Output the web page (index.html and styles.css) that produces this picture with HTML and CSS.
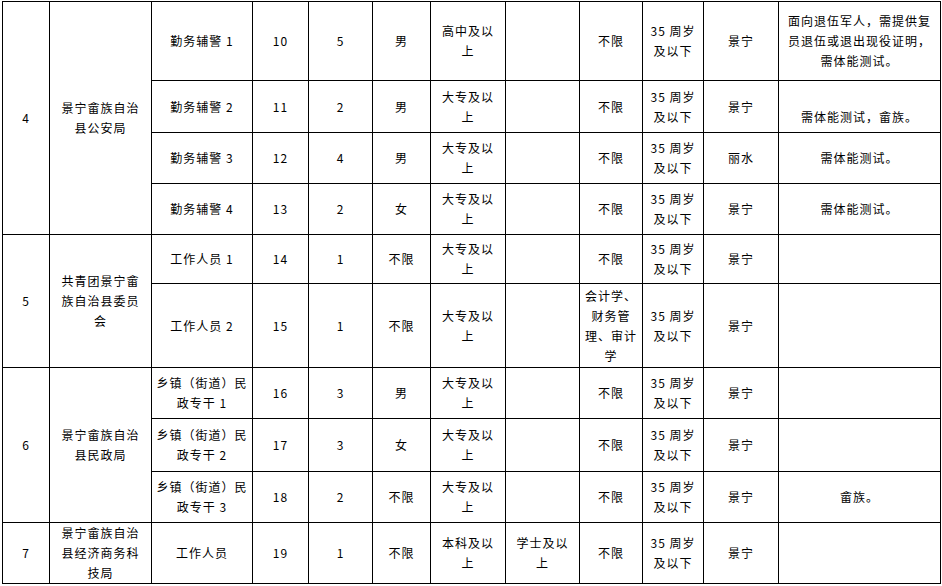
FILE: index.html
```html
<!DOCTYPE html>
<html lang="zh-CN">
<head>
<meta charset="utf-8">
<title>招聘岗位表</title>
<link rel="stylesheet" href="styles.css">
</head>
<body>
<table class="jobs">
  <colgroup>
    <col class="c-no"><col class="c-unit"><col class="c-pos"><col class="c-code"><col class="c-num"><col class="c-sex"><col class="c-edu"><col class="c-deg"><col class="c-major"><col class="c-age"><col class="c-area"><col class="c-note">
  </colgroup>
  <tbody>
    <tr class="h79">
      <td rowspan="4">4</td>
      <td rowspan="4">景宁畲族自治<br>县公安局</td>
      <td>勤务辅警 1</td><td>10</td><td>5</td><td>男</td><td>高中及以<br>上</td><td></td><td>不限</td><td>35 周岁<br>及以下</td><td>景宁</td>
      <td>面向退伍军人，需提供复<br>员退伍或退出现役证明，<br>需体能测试。</td>
    </tr>
    <tr class="h52">
      <td>勤务辅警 2</td><td>11</td><td>2</td><td>男</td><td>大专及以<br>上</td><td></td><td>不限</td><td>35 周岁<br>及以下</td><td>景宁</td>
      <td class="low">需体能测试，畲族。</td>
    </tr>
    <tr class="h51">
      <td>勤务辅警 3</td><td>12</td><td>4</td><td>男</td><td>大专及以<br>上</td><td></td><td>不限</td><td>35 周岁<br>及以下</td><td>丽水</td>
      <td>需体能测试。</td>
    </tr>
    <tr class="h51">
      <td>勤务辅警 4</td><td>13</td><td>2</td><td>女</td><td>大专及以<br>上</td><td></td><td>不限</td><td>35 周岁<br>及以下</td><td>景宁</td>
      <td>需体能测试。</td>
    </tr>
    <tr class="h49">
      <td rowspan="2">5</td>
      <td rowspan="2">共青团景宁畲<br>族自治县委员<br>会</td>
      <td>工作人员 1</td><td>14</td><td>1</td><td>不限</td><td>大专及以<br>上</td><td></td><td>不限</td><td>35 周岁<br>及以下</td><td>景宁</td><td></td>
    </tr>
    <tr class="h84">
      <td>工作人员 2</td><td>15</td><td>1</td><td>不限</td><td>大专及以<br>上</td><td></td><td>会计学、<br>财务管<br>理、审计<br>学</td><td>35 周岁<br>及以下</td><td>景宁</td><td></td>
    </tr>
    <tr class="h51">
      <td rowspan="3">6</td>
      <td rowspan="3">景宁畲族自治<br>县民政局</td>
      <td>乡镇（街道）民<br>政专干 1</td><td>16</td><td>3</td><td>男</td><td>大专及以<br>上</td><td></td><td>不限</td><td>35 周岁<br>及以下</td><td>景宁</td><td></td>
    </tr>
    <tr class="h53">
      <td>乡镇（街道）民<br>政专干 2</td><td>17</td><td>3</td><td>女</td><td>大专及以<br>上</td><td></td><td>不限</td><td>35 周岁<br>及以下</td><td>景宁</td><td></td>
    </tr>
    <tr class="h51">
      <td>乡镇（街道）民<br>政专干 3</td><td>18</td><td>2</td><td>不限</td><td>大专及以<br>上</td><td></td><td>不限</td><td>35 周岁<br>及以下</td><td>景宁</td><td>畲族。</td>
    </tr>
    <tr class="h61">
      <td>7</td>
      <td>景宁畲族自治<br>县经济商务科<br>技局</td>
      <td>工作人员</td><td>19</td><td>1</td><td>不限</td><td>本科及以<br>上</td><td>学士及以<br>上</td><td>不限</td><td>35 周岁<br>及以下</td><td>景宁</td><td></td>
    </tr>
  </tbody>
</table>
</body>
</html>
```

FILE: styles.css
```css
html, body {
  margin: 0;
  padding: 0;
  background: #ffffff;
}

body {
  padding: 1px 0 0 2px;
}

.jobs {
  border-collapse: collapse;
  table-layout: fixed;
  width: 938px;
  font-family: "Noto Sans CJK SC", "Liberation Sans", sans-serif;
  font-size: 12px;
  font-weight: 400;
  letter-spacing: 1px;
  line-height: 20px;
  color: #000000;
}

.jobs td {
  border: 1px solid #000000;
  padding: 0;
  text-align: center;
  vertical-align: middle;
  white-space: nowrap;
  overflow: hidden;
}

.c-no { width: 47px; }
.c-unit { width: 102px; }
.c-pos { width: 101px; }
.c-code { width: 56px; }
.c-num { width: 64px; }
.c-sex { width: 58px; }
.c-edu { width: 75px; }
.c-deg { width: 74px; }
.c-major { width: 63px; }
.c-age { width: 61px; }
.c-area { width: 75px; }
.c-note { width: 162px; }

.h79 { height: 79px; }
.h52 { height: 52px; }
.h51 { height: 51px; }
.h49 { height: 49px; }
.h84 { height: 84px; }
.h53 { height: 53px; }
.h61 { height: 61px; }

.jobs td.low {
  padding-top: 20px;
}
```
